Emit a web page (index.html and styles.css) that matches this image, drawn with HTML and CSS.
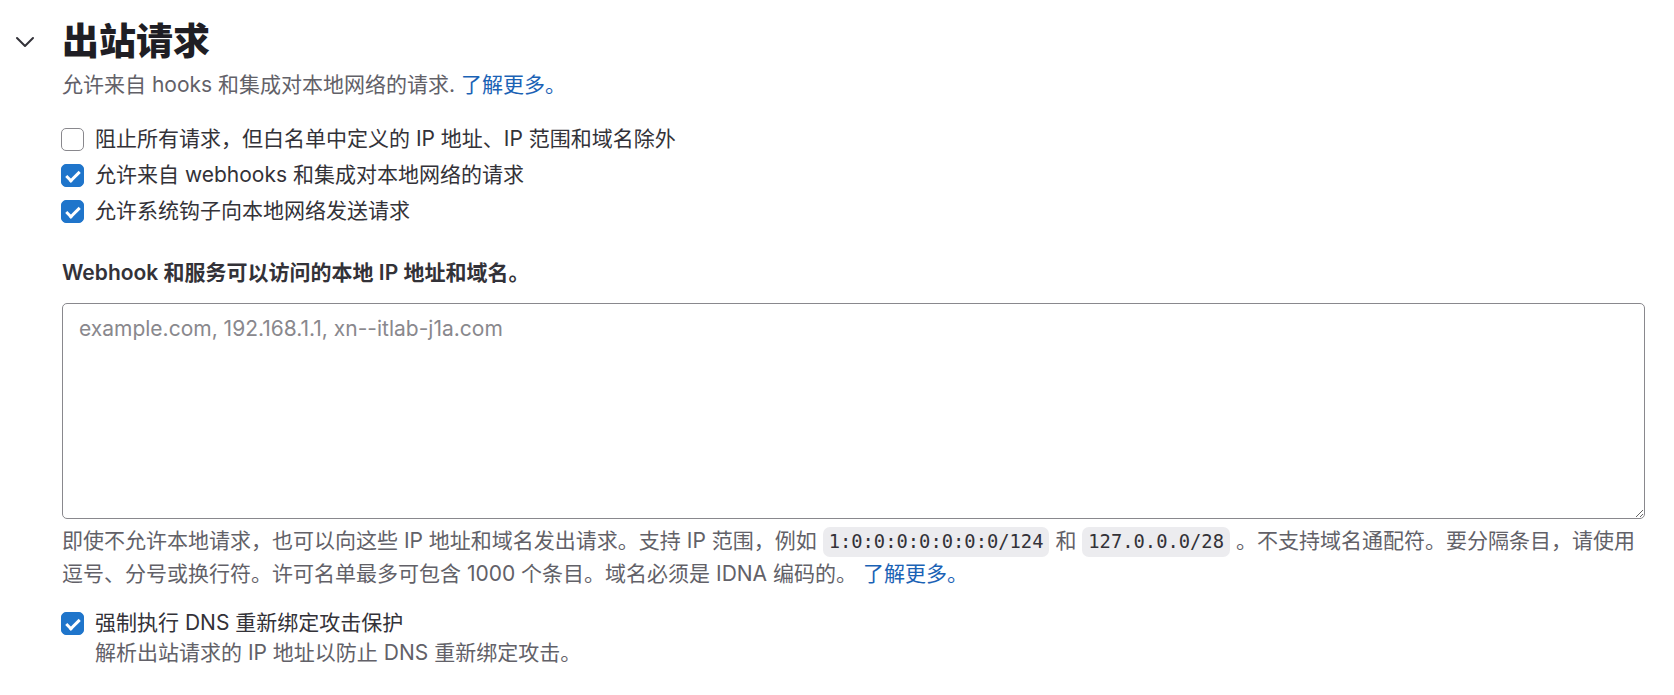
FILE: index.html
```html
<!DOCTYPE html>
<html lang="zh-CN">
<head>
    <meta charset="UTF-8">
    <meta name="viewport" content="width=device-width, initial-scale=1.0">
    <title>出站请求</title>
    <link rel="stylesheet" href="styles.css">
</head>
<body>
    <section class="settings-section">
        <div class="section-header">
            <button class="section-toggle" aria-label="折叠">
                <svg width="20" height="12" viewBox="0 0 20 12"><path d="M2 2 L10 10 L18 2" fill="none" stroke="#333238" stroke-width="2" stroke-linecap="round" stroke-linejoin="round"/></svg>
            </button>
            <h2 class="section-title">出站请求</h2>
        </div>
        <p class="section-desc">允许来自 hooks 和集成对本地网络的请求. <a href="#">了解更多。</a></p>

        <div class="checkbox-list">
            <label class="checkbox"><input type="checkbox"> 阻止所有请求，但白名单中定义的 IP 地址、IP 范围和域名除外</label>
            <label class="checkbox"><input type="checkbox" checked> 允许来自 webhooks 和集成对本地网络的请求</label>
            <label class="checkbox"><input type="checkbox" checked> 允许系统钩子向本地网络发送请求</label>
        </div>

        <label class="field-label" for="allowlist">Webhook 和服务可以访问的本地 IP 地址和域名。</label>
        <textarea id="allowlist" class="field-input" placeholder="example.com, 192.168.1.1, xn--itlab-j1a.com"></textarea>
        <p class="field-help">即使不允许本地请求，也可以向这些 IP 地址和域名发出请求。支持 IP 范围，例如 <code>1:0:0:0:0:0:0:0/124</code> 和 <code>127.0.0.0/28</code> 。不支持域名通配符。要分隔条目，请使用逗号、分号或换行符。许可名单最多可包含 1000 个条目。域名必须是 IDNA 编码的。 <a href="#">了解更多。</a></p>

        <div class="checkbox checkbox-detail">
            <input type="checkbox" id="dnsRebind" checked>
            <div>
                <label for="dnsRebind">强制执行 DNS 重新绑定攻击保护</label>
                <p class="checkbox-help">解析出站请求的 IP 地址以防止 DNS 重新绑定攻击。</p>
            </div>
        </div>
    </section>
</body>
</html>
```

FILE: styles.css
```css
body {
    margin: 0;
    background-color: #fff;
    font-family: Inter, "Noto Sans CJK SC", sans-serif;
    font-size: 21px;
    color: #333238;
}
a {
    color: #1a62b5;
    text-decoration: none;
}

.settings-section {
    padding: 20px 29px 0 62px;
}
.section-header {
    display: flex;
    align-items: center;
    margin-left: -62px;
}
.section-toggle {
    width: 62px;
    height: 44px;
    padding: 0 0 0 15px;
    border: none;
    background: none;
    display: flex;
    align-items: center;
    cursor: pointer;
}
.section-title {
    margin: 0;
    font-size: 37px;
    line-height: 44px;
    font-weight: 800;
    color: #1f1e24;
}
.section-desc {
    margin: 5px 0 0;
    line-height: 32px;
    color: #626168;
}

.checkbox-list {
    margin-top: 20px;
}
.checkbox {
    display: flex;
    align-items: center;
    gap: 11px;
    line-height: 36px;
}
.checkbox input {
    appearance: none;
    flex: none;
    position: relative;
    width: 23px;
    height: 23px;
    margin: 0 0 0 -1px;
    border: 1px solid #89888d;
    border-radius: 5px;
    background: #fff;
}
.checkbox input:checked {
    background-color: #1f75cb;
    border-color: #1f75cb;
}
.checkbox input:checked::after {
    content: "";
    position: absolute;
    left: 7px;
    top: 3px;
    width: 5px;
    height: 11px;
    border-right: 3px solid #fff;
    border-bottom: 3px solid #fff;
    transform: rotate(45deg);
}

.field-label {
    display: block;
    margin-top: 28px;
    margin-bottom: 14px;
    line-height: 32px;
    font-weight: 600;
}
.field-input {
    display: block;
    width: 100%;
    height: 216px;
    box-sizing: border-box;
    padding: 9px 16px;
    border: 1px solid #89888d;
    border-radius: 5px;
    font-family: inherit;
    font-size: 21px;
    line-height: 32px;
    color: #333238;
}
.field-input::placeholder {
    color: #89888d;
}
.field-help {
    margin: 6px 0 0;
    line-height: 32px;
    color: #626168;
}
code {
    font-family: "DejaVu Sans Mono", monospace;
    font-size: 18.8px;
    color: #333238;
    background-color: #ececef;
    border-radius: 7px;
    padding: 4px 6px 5px;
}

.checkbox-detail {
    margin-top: 18px;
    align-items: flex-start;
    line-height: 30px;
}
.checkbox-detail input {
    margin-top: 4px;
}
.checkbox-help {
    margin: 0;
    color: #626168;
}
```
